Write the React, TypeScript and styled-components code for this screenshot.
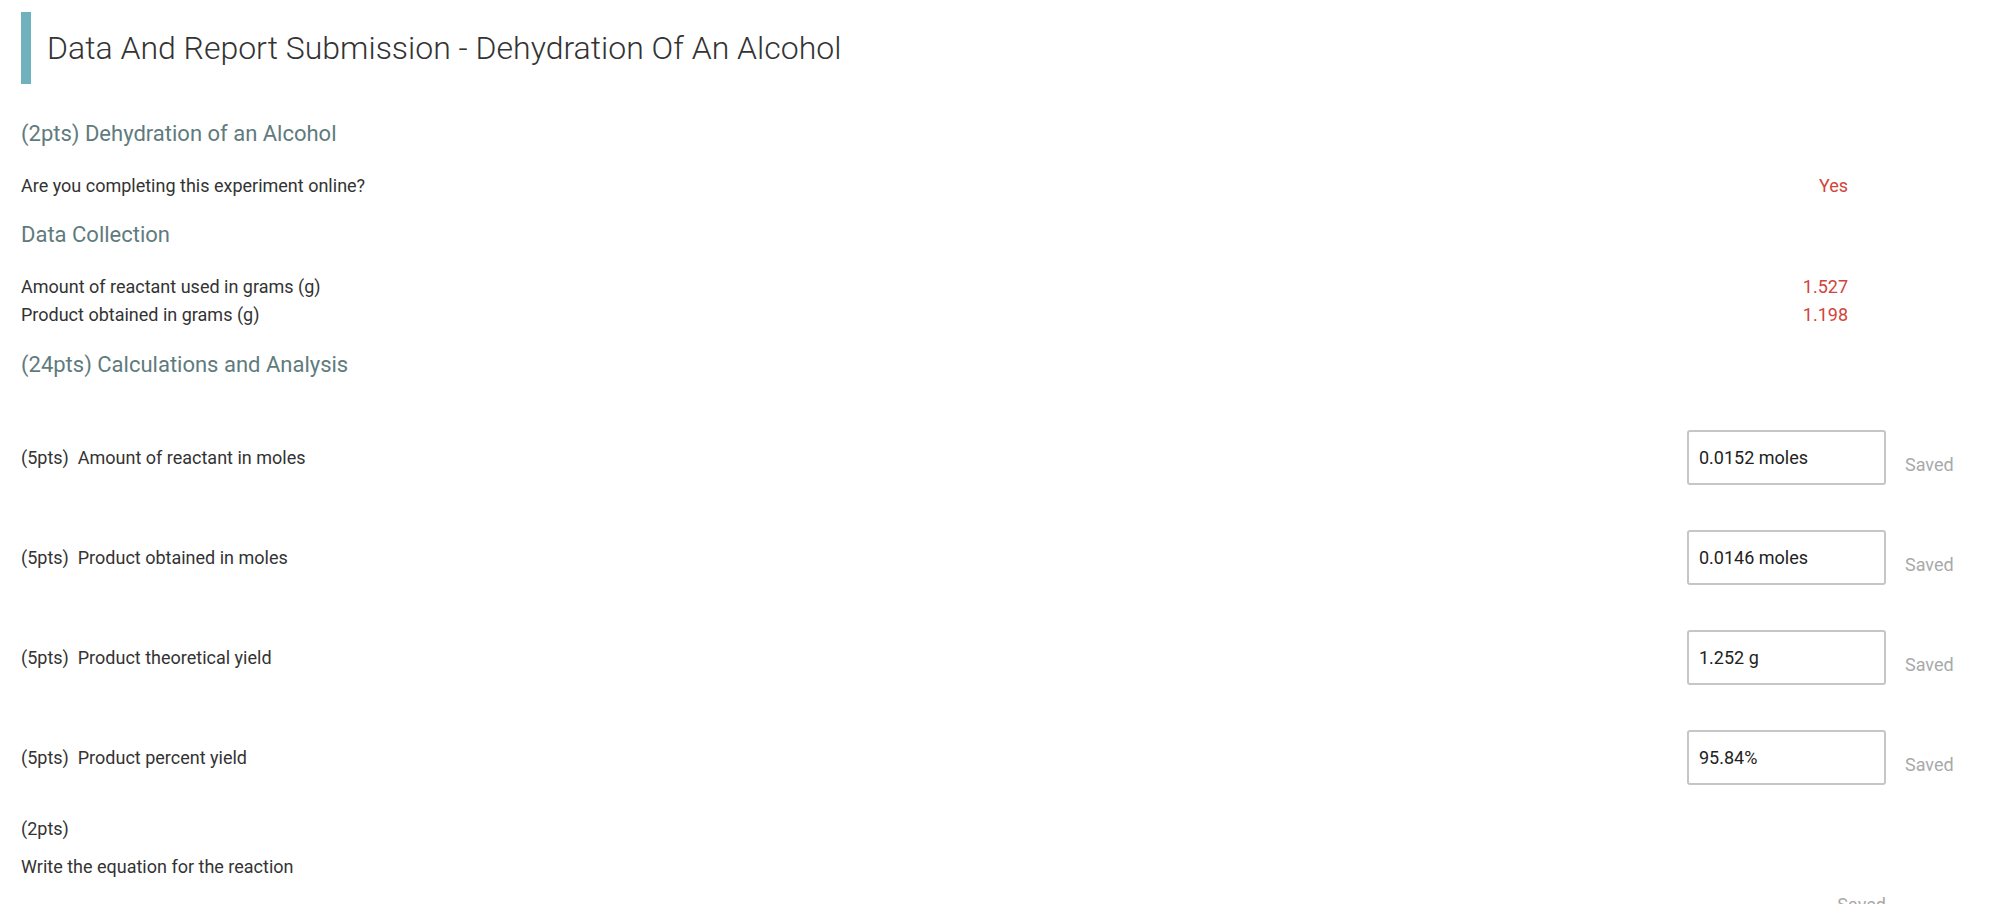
import React from "react";
import styled, { createGlobalStyle } from "styled-components";

const GlobalStyle = createGlobalStyle`
  html, body {
    margin: 0;
    padding: 0;
    background: #ffffff;
  }
  body {
    font-family: Roboto, "Liberation Sans", Arial, sans-serif;
    color: #333333;
  }
`;

// Page wrapper
const Page = styled.div`
  padding: 12px 0 0 21px;
  overflow: hidden;
  height: 892px;
`;

// Title with accent bar
const TitleBlock = styled.div`
  display: flex;
  align-items: center;
  height: 72px;
  border-left: 10px solid #6fb2be;
  padding-left: 16px;
`;

const Title = styled.h1`
  margin: 0;
  font-size: 32px;
  font-weight: 300;
  color: #333333;
  line-height: 40px;
`;

// Section heading
const SectionHeading = styled.h2<{ $gap: number }>`
  margin: ${(p) => p.$gap}px 0 0;
  font-size: 22px;
  font-weight: 400;
  line-height: 25px;
  color: #5f7b7d;
`;

// Read-only answer list
const InfoList = styled.div<{ $gap: number }>`
  margin-top: ${(p) => p.$gap}px;
  padding-right: 154px;
`;

const InfoRow = styled.div`
  display: flex;
  justify-content: space-between;
  font-size: 18px;
  line-height: 28px;
  color: #333333;
`;

const InfoValue = styled.span`
  color: #d1443b;
`;

// Question rows with input
const QuestionList = styled.div`
  display: flex;
  flex-direction: column;
  gap: 45px;
  margin-top: 53px;
`;

const QuestionRow = styled.div`
  display: flex;
  align-items: center;
  height: 55px;
`;

const QuestionLabel = styled.div`
  flex: 1;
  font-size: 18px;
  line-height: 28px;
  color: #333333;
  white-space: pre;
`;

const AnswerBox = styled.input`
  box-sizing: border-box;
  width: 199px;
  height: 55px;
  border: 2px solid #c6c6c6;
  border-radius: 3px;
  padding: 0 10px;
  font-family: Roboto, "Liberation Sans", Arial, sans-serif;
  font-size: 18px;
  color: #222222;
  background: #ffffff;
  outline: none;
`;

const SavedNote = styled.span`
  width: 116px;
  box-sizing: border-box;
  padding: 14px 0 0 19px;
  font-size: 18px;
  line-height: 28px;
  color: #a9a9a9;
`;

// Free-text question
const FreeQuestion = styled.div`
  margin-top: 30px;
  font-size: 18px;
  line-height: 28px;
  color: #333333;
`;

const FreePrompt = styled.div`
  margin-top: 10px;
`;

const FreeSaved = styled.div`
  margin-top: 10px;
  padding-right: 116px;
  text-align: right;
  font-size: 18px;
  line-height: 28px;
  color: #a9a9a9;
`;

const data = [
  { label: "Amount of reactant used in grams (g)", value: "1.527" },
  { label: "Product obtained in grams (g)", value: "1.198" },
];

const questions = [
  { label: "Amount of reactant in moles", answer: "0.0152 moles" },
  { label: "Product obtained in moles", answer: "0.0146 moles" },
  { label: "Product theoretical yield", answer: "1.252 g" },
  { label: "Product percent yield", answer: "95.84%" },
];

export default function App() {
  return (
    <>
      <GlobalStyle />
      <Page>
        <TitleBlock>
          <Title>Data And Report Submission - Dehydration Of An Alcohol</Title>
        </TitleBlock>

        <SectionHeading $gap={37}>(2pts) Dehydration of an Alcohol</SectionHeading>
        <InfoList $gap={26}>
          <InfoRow>
            <span>Are you completing this experiment online?</span>
            <InfoValue>Yes</InfoValue>
          </InfoRow>
        </InfoList>

        <SectionHeading $gap={22}>Data Collection</SectionHeading>
        <InfoList $gap={26}>
          {data.map((d) => (
            <InfoRow key={d.label}>
              <span>{d.label}</span>
              <InfoValue>{d.value}</InfoValue>
            </InfoRow>
          ))}
        </InfoList>

        <SectionHeading $gap={23}>(24pts) Calculations and Analysis</SectionHeading>
        <QuestionList>
          {questions.map((q) => (
            <QuestionRow key={q.label}>
              <QuestionLabel>{"(5pts)  " + q.label}</QuestionLabel>
              <AnswerBox defaultValue={q.answer} readOnly />
              <SavedNote>Saved</SavedNote>
            </QuestionRow>
          ))}
        </QuestionList>

        <FreeQuestion>
          <div>(2pts)</div>
          <FreePrompt>Write the equation for the reaction</FreePrompt>
        </FreeQuestion>
        <FreeSaved>Saved</FreeSaved>
      </Page>
    </>
  );
}
